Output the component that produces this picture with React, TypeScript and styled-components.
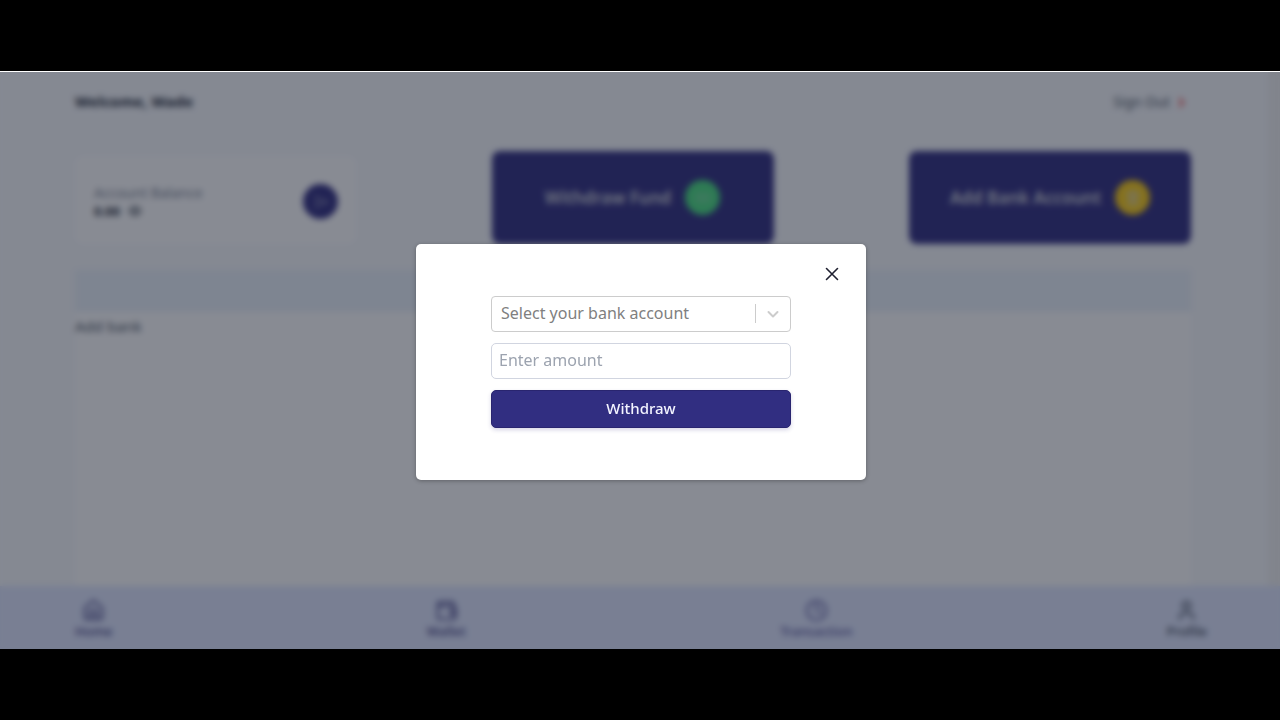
import React from "react";
import styled, { createGlobalStyle } from "styled-components";
import { Home, Wallet, Clock, User, SendHorizontal, Eye, ChevronRight, Landmark, Banknote } from "lucide-react";

const GlobalStyle = createGlobalStyle`
  *, *::before, *::after { box-sizing: border-box; }
  body { margin: 0; background: #000; font-family: "Noto Sans", "Open Sans", sans-serif; color: #1f2937; }
  button, input, select { font: inherit; color: inherit; margin: 0; }
  h1, p { margin: 0; }
`;

const Frame = styled.div`
  display: flex;
  flex-direction: column;
  min-height: 100vh;
  padding: 71px 0;
  background: #000;
`;

const Stage = styled.div`
  position: relative;
  flex: 1;
  display: flex;
  flex-direction: column;
  border-top: 1px solid #fff;
  background: #f8fafd;
  overflow: hidden;
`;

const Body = styled.div`
  flex: 1;
  display: flex;
`;

const ScrollTrack = styled.div`
  width: 12px;
  background: #f1f1f1;
`;

const Main = styled.main`
  flex: 1;
  display: flex;
  flex-direction: column;
  padding: 0 77px 0 75px;
`;

const TopBar = styled.header`
  display: flex;
  align-items: center;
  justify-content: space-between;
  height: 58px;
`;

const Welcome = styled.h1`
  font-size: 15px;
  line-height: 20px;
  font-weight: 700;
`;

const SignOut = styled.button`
  display: flex;
  align-items: center;
  gap: 4px;
  padding: 2px 2px 0 0;
  border: 0;
  background: none;
  color: #4b5563;
  font-size: 14px;
  line-height: 20px;
  svg { color: #ef4444; }
`;

const CardRow = styled.div`
  display: flex;
  justify-content: space-between;
  align-items: flex-end;
  margin: 21px 0 26px;
`;

const BalanceCard = styled.section`
  display: flex;
  align-items: center;
  justify-content: space-between;
  width: 281px;
  height: 88px;
  padding: 3px 18px 0 19px;
  border-radius: 8px;
  background: #fff;
`;

const BalanceLabel = styled.p`
  font-size: 14px;
  line-height: 19px;
  font-weight: 400;
  color: #7c8494;
`;

const BalanceValue = styled.p`
  display: flex;
  align-items: center;
  gap: 8px;
  font-size: 13px;
  line-height: 19px;
  font-weight: 700;
  color: #1f2937;
`;

const ActionCard = styled.button`
  display: flex;
  align-items: center;
  justify-content: center;
  gap: 14px;
  width: 282px;
  height: 93px;
  padding: 0;
  border: 0;
  border-radius: 8px;
  background: #312e81;
  color: #d1d5db;
  font-size: 17px;
  font-weight: 600;
`;

const Badge = styled.span<{ $color: string }>`
  display: grid;
  place-items: center;
  width: 35px;
  height: 35px;
  border-radius: 50%;
  background: ${(p) => p.$color};
  color: #d1d5db;
`;

const Band = styled.div`
  height: 42px;
  background: #ebf2fa;
`;

const Panel = styled.section`
  flex: 1;
  padding-top: 4px;
  background: #fff;
  color: #4b5563;
  font-size: 15px;
  line-height: 20px;
`;

const BottomNav = styled.nav`
  display: flex;
  align-items: center;
  justify-content: space-between;
  height: 63px;
  padding: 3px 73px 0 75px;
  background: #e0e7ff;
`;

const NavItem = styled.a<{ $color: string }>`
  display: flex;
  flex-direction: column;
  align-items: center;
  color: ${(p) => p.$color};
  font-size: 13px;
  line-height: 18px;
  font-weight: 500;
  text-decoration: none;
`;

const Overlay = styled.div`
  position: absolute;
  inset: 0;
  display: grid;
  place-items: center;
  padding: 2px 0 0 2px;
  background: rgba(17, 24, 39, 0.5);
  backdrop-filter: blur(3px);
`;

const Modal = styled.div`
  width: 450px;
  max-width: 100%;
  padding: 16px 20px 52px;
  border-radius: 5px;
  background: #fff;
  box-shadow: 0 1px 4px rgba(0, 0, 0, 0.3);
`;

const ModalHeader = styled.div`
  display: flex;
  justify-content: flex-end;
  margin-bottom: 8px;
`;

const CloseButton = styled.button`
  display: grid;
  place-items: center;
  width: 28px;
  height: 28px;
  padding: 0;
  border: 0;
  background: none;
  color: #1f2030;
`;

const Form = styled.form`
  display: flex;
  flex-direction: column;
  gap: 11px;
  width: 300px;
  margin: 0 auto;
`;

const SelectBox = styled.div`
  display: grid;
  align-items: center;
  height: 36px;
  border: 1px solid #ccc;
  border-radius: 4px;
  background: #fff;
  > * { grid-area: 1 / 1; }
`;

const BankSelect = styled.select`
  appearance: none;
  width: 100%;
  height: 34px;
  padding: 0 44px 2px 9px;
  border: 0;
  border-radius: 4px;
  background: transparent;
  color: #808080;
  font-size: 16px;
  outline: none;
`;

const Indicator = styled.span`
  display: grid;
  place-items: center;
  justify-self: end;
  width: 35px;
  height: 19px;
  border-left: 1px solid #ccc;
  color: #ccc;
  pointer-events: none;
`;

const AmountInput = styled.input`
  width: 100%;
  height: 36px;
  padding: 0 7px 2px;
  border: 1px solid #d1d5e0;
  border-radius: 5px;
  background: #fff;
  font-size: 16px;
  outline: none;
  &::placeholder { color: #9ca3af; opacity: 1; }
`;

const SubmitButton = styled.button`
  height: 38px;
  padding: 0 0 2px;
  border: 1px solid #29256f;
  border-radius: 5px;
  background: #312e81;
  box-shadow: 0 2px 4px rgba(49, 46, 129, 0.2);
  color: #f3f4ff;
  font-size: 15px;
  font-weight: 500;
`;

const navItems = [
  { label: "Home", Icon: Home, color: "#3f3d82" },
  { label: "Wallet", Icon: Wallet, color: "#3f3d82" },
  { label: "Transaction", Icon: Clock, color: "#55529c" },
  { label: "Profile", Icon: User, color: "#374151" },
];

export default function App() {
  return (
    <Frame>
      <GlobalStyle />
      <Stage>
        <Body>
          <Main>
            <TopBar>
              <Welcome>Welcome, Wade</Welcome>
              <SignOut type="button">
                Sign Out <ChevronRight size={15} strokeWidth={3} />
              </SignOut>
            </TopBar>
            <CardRow>
              <BalanceCard>
                <div>
                  <BalanceLabel>Account Balance</BalanceLabel>
                  <BalanceValue>
                    0.00 <Eye size={14} />
                  </BalanceValue>
                </div>
                <Badge $color="#312e81">
                  <SendHorizontal size={16} strokeWidth={1} />
                </Badge>
              </BalanceCard>
              <ActionCard type="button">
                Withdraw Fund
                <Badge $color="#4ade80">
                  <Banknote size={16} strokeWidth={1} />
                </Badge>
              </ActionCard>
              <ActionCard type="button">
                Add Bank Account
                <Badge $color="#facc15">
                  <Landmark size={16} />
                </Badge>
              </ActionCard>
            </CardRow>
            <Band />
            <Panel>Add bank</Panel>
          </Main>
          <ScrollTrack />
        </Body>
        <BottomNav aria-label="Main">
          {navItems.map(({ label, Icon, color }) => (
            <NavItem key={label} href="#" $color={color}>
              <Icon size={23} />
              {label}
            </NavItem>
          ))}
        </BottomNav>
        <Overlay>
          <Modal role="dialog" aria-modal="true" aria-label="Withdraw fund">
            <ModalHeader>
              <CloseButton type="button" aria-label="Close">
                <svg width="14" height="14" viewBox="0 0 14 14" fill="none" stroke="currentColor" strokeWidth="1.6" strokeLinecap="round">
                  <path d="M1.500 1.500l11 11M12.500 1.500l-11 11" />
                </svg>
              </CloseButton>
            </ModalHeader>
            <Form onSubmit={(e) => e.preventDefault()}>
              <SelectBox>
                <BankSelect aria-label="Bank account" defaultValue="">
                  <option value="">Select your bank account</option>
                </BankSelect>
                <Indicator>
                  <svg width="12" height="8" viewBox="0 0 12 8" fill="none" stroke="currentColor" strokeWidth="2" strokeLinecap="round" strokeLinejoin="round">
                    <path d="M1.500 2L6 6.500l4.500-4.500" />
                  </svg>
                </Indicator>
              </SelectBox>
              <AmountInput type="text" inputMode="decimal" aria-label="Amount" placeholder="Enter amount" />
              <SubmitButton type="submit">Withdraw</SubmitButton>
            </Form>
          </Modal>
        </Overlay>
      </Stage>
    </Frame>
  );
}
